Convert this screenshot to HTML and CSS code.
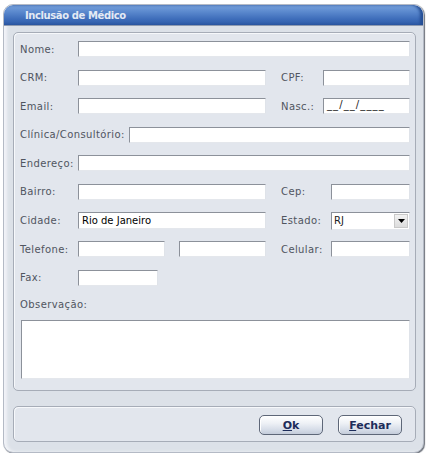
FILE: index.html
```html
<!DOCTYPE html>
<html lang="pt-BR">
<head>
<meta charset="utf-8">
<title>Inclusão de Médico</title>
<link rel="stylesheet" href="styles.css">
</head>
<body>
<div class="window">
  <div class="titlebar"><span class="title">Inclusão de Médico</span></div>
  <div class="content">
    <div class="panel">
      <div class="row">
        <label class="lbl">Nome:</label>
        <input class="field w-full" type="text">
      </div>
      <div class="row">
        <label class="lbl">CRM:</label>
        <input class="field w-mid" type="text">
        <label class="lbl-r narrow">CPF:</label>
        <input class="field w-cpf" type="text">
      </div>
      <div class="row">
        <label class="lbl">Email:</label>
        <input class="field w-mid" type="text">
        <label class="lbl-r narrow">Nasc.:</label>
        <div class="field w-cpf mask">__/__/____</div>
      </div>
      <div class="row">
        <label class="lbl wide">Clínica/Consultório:</label>
        <input class="field w-clin" type="text">
      </div>
      <div class="row">
        <label class="lbl">Endereço:</label>
        <input class="field w-full" type="text">
      </div>
      <div class="row">
        <label class="lbl">Bairro:</label>
        <input class="field w-mid" type="text">
        <label class="lbl-r">Cep:</label>
        <input class="field w-sm" type="text">
      </div>
      <div class="row">
        <label class="lbl">Cidade:</label>
        <input class="field w-mid tall" type="text" value="Rio de Janeiro">
        <label class="lbl-r">Estado:</label>
        <div class="select"><span class="sel-val">RJ</span><span class="sel-btn"><svg width="7" height="4" viewBox="0 0 7 4"><path d="M0 0H7L3.5 4Z" fill="#000"/></svg></span></div>
      </div>
      <div class="row">
        <label class="lbl">Telefone:</label>
        <input class="field w-tel" type="text">
        <input class="field w-tel tel2" type="text">
        <label class="lbl-r">Celular:</label>
        <input class="field w-sm" type="text">
      </div>
      <div class="row">
        <label class="lbl">Fax:</label>
        <input class="field w-fax" type="text">
      </div>
      <div class="obs">
        <label class="lbl">Observação:</label>
        <textarea class="area"></textarea>
      </div>
    </div>
    <div class="btnbar">
      <button class="btn"><u>O</u>k</button>
      <button class="btn"><u>F</u>echar</button>
    </div>
  </div>
</div>
</body>
</html>
```
FILE: styles.css
```css
html, body {
  margin: 0;
  padding: 0;
  background: #ffffff;
}
body {
  font-family: "DejaVu Sans", Verdana, sans-serif;
  font-size: 10px;
}
.window {
  box-sizing: border-box;
  margin: 4px 0 0 3px;
  width: 421px;
  height: 449px;
  border: 1px solid #b4bac5;
  border-radius: 10px;
  background: #dce1e8;
  box-shadow: 1px 1px 1px #6e737c, inset 3px 0 3px #f1f3f7;
  display: flex;
  flex-direction: column;
  overflow: hidden;
}
.titlebar {
  flex: none;
  height: 21px;
  box-sizing: border-box;
  background: linear-gradient(#79a3dd 0%, #5a88cd 35%, #3e6dba 70%, #2d5ba8 100%);
  border-radius: 9px 9px 0 0;
  border-bottom: 1px solid #8f9bb0;
  display: flex;
  align-items: center;
  padding-left: 21px;
  box-shadow: inset -3px 0 3px #254e94;
}
.title {
  color: #e4eaf4;
  font-weight: bold;
  font-size: 10px;
  letter-spacing: -0.4px;
}
.content {
  flex: none;
  padding: 6px 0 0 9px;
  display: flex;
  flex-direction: column;
  gap: 15px;
}
.panel {
  flex: none;
  box-sizing: border-box;
  width: 403px;
  height: 359px;
  border: 1px solid #a6acb7;
  border-radius: 5px;
  background: #e2e6ed;
  box-shadow: inset 1px 1px 0 #f6f8fb;
  padding: 8px 5px 0 6px;
  display: flex;
  flex-direction: column;
  gap: 12.6px;
}
.row {
  flex: none;
  height: 16px;
  display: flex;
  align-items: center;
}
.lbl {
  width: 58px;
  flex: none;
  color: #50555f;
  white-space: nowrap;
  letter-spacing: 0.4px;
}
.lbl.wide { width: 109px; }
.lbl-r {
  flex: none;
  width: 50px;
  margin-left: 15px;
  color: #50555f;
  white-space: nowrap;
  letter-spacing: 0.4px;
}
.lbl-r.narrow { width: 42px; }
.field {
  box-sizing: border-box;
  height: 16px;
  margin: 0;
  padding: 0 0 0 3px;
  border: 1px solid;
  border-color: #8c919a #dfe3e9 #e4e7ec #8c919a;
  background: #ffffff;
  font-family: "DejaVu Sans", Verdana, sans-serif;
  font-size: 10px;
  color: #000000;
  flex: none;
  outline: none;
}
.mask {
  line-height: 11px;
  color: #222;
  letter-spacing: 1.1px;
}
.field.tall { height: 17px; }
.w-full { width: 332px; }
.w-mid { width: 188px; }
.w-cpf { width: 87px; }
.w-clin { width: 281px; }
.w-sm { width: 79px; }
.w-tel { width: 87px; }
.tel2 { margin-left: 14px; }
.w-fax { width: 80px; }
.select {
  box-sizing: border-box;
  width: 79px;
  height: 18px;
  flex: none;
  background: #ffffff;
  border: 1px solid;
  border-color: #8c919a #dfe3e9 #e4e7ec #8c919a;
  display: flex;
  align-items: center;
  justify-content: space-between;
  padding: 0 1px 0 2px;
}
.sel-val {
  color: #222;
  font-size: 10px;
}
.sel-btn {
  width: 14px;
  height: 14px;
  box-sizing: border-box;
  background: linear-gradient(#f2f2f2, #dcdcdc);
  border: 1px solid #c9c9c9;
  display: flex;
  align-items: center;
  justify-content: center;
}
.obs {
  flex: none;
  display: flex;
  flex-direction: column;
  gap: 10px;
  margin-top: 1px;
}
.obs .lbl { width: auto; }
.area {
  box-sizing: border-box;
  width: 389px;
  height: 59px;
  margin: 0 0 0 1px;
  border: 1px solid;
  border-color: #8c919a #dfe3e9 #e4e7ec #8c919a;
  background: #fff;
  resize: none;
  outline: none;
}
.btnbar {
  flex: none;
  box-sizing: border-box;
  width: 403px;
  height: 36px;
  border: 1px solid #a6acb7;
  border-radius: 5px;
  background: #e2e6ed;
  box-shadow: inset 1px 1px 0 #f6f8fb;
  display: flex;
  justify-content: flex-end;
  align-items: center;
  gap: 15px;
  padding: 2px 13px 0 0;
}
.btn {
  width: 64px;
  height: 20px;
  box-sizing: border-box;
  margin: 0;
  padding: 0;
  border: 1px solid #5e6778;
  border-radius: 5px;
  background: linear-gradient(#ffffff 0%, #eef1f6 40%, #d3dae6 80%, #c4ccda 100%);
  box-shadow: inset 1px 1px 0 #ffffff;
  font-family: "DejaVu Sans", Verdana, sans-serif;
  font-size: 11px;
  font-weight: bold;
  color: #1d2c5a;
}
```
